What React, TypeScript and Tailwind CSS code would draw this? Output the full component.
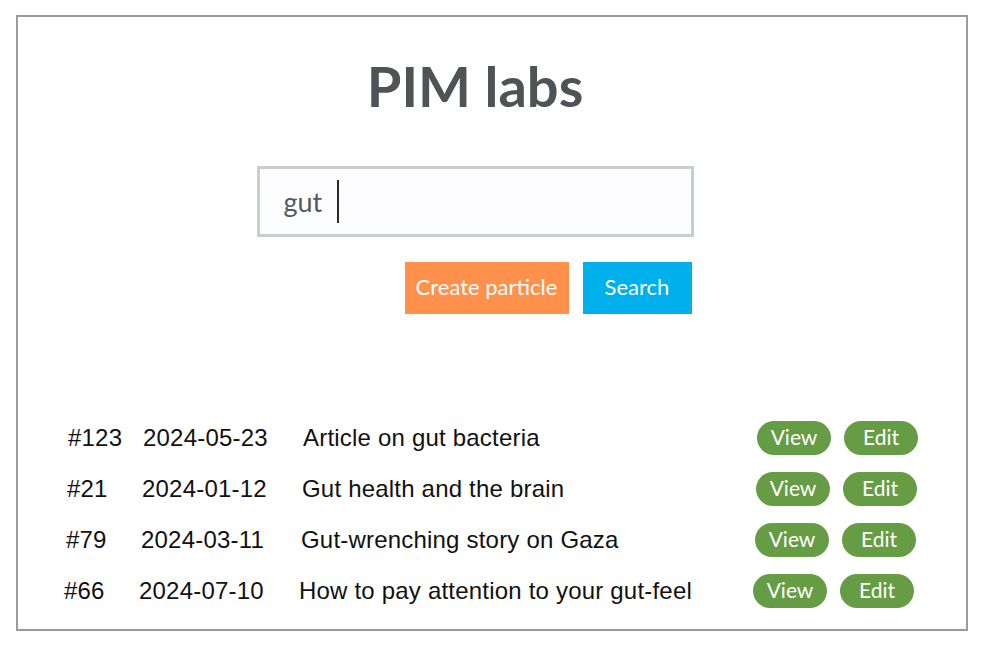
import React from "react";

const rows = [
  { id: "#123", date: "2024-05-23", title: "Article on gut bacteria", pad: "pl-[50px]" },
  { id: "#21", date: "2024-01-12", title: "Gut health and the brain", pad: "pl-[49px]" },
  { id: "#79", date: "2024-03-11", title: "Gut-wrenching story on Gaza", pad: "pl-[48px]" },
  { id: "#66", date: "2024-07-10", title: "How to pay attention to your gut-feel", pad: "pl-[46px]" },
];

const sans = "font-['Lato','Noto_Sans',sans-serif]";
const helv = "font-['Liberation_Sans','Arial',sans-serif] tracking-[0.2px]";

export default function App() {
  return (
    <div className="bg-white w-[984px] h-[646px] pt-[15px] pl-[16px]">
      <div className="w-[952px] h-[616px] border-2 border-[#9b9b9b] bg-white">
        <div className="flex flex-col items-center pr-[34px] pt-[41px]">
          <h1 className={`${sans} text-[56px] leading-[56px] font-bold text-[#4f5355]`}>PIM labs</h1>
          <div className="mt-[52px] w-[437px] h-[71px] border-[3px] border-[#c6cece] bg-[#fdfdff] flex items-center pl-[24px]">
            <span className={`${sans} text-[27px] text-[#55595c] leading-none`}>gut</span>
            <span className="ml-[15px] w-[2px] h-[43px] bg-[#2a2a2a]" />
          </div>
          <div className="mt-[25px] w-[437px] flex justify-end gap-[14px] pr-[2px]">
            <button className={`${sans} w-[164px] h-[52px] pb-[3px] bg-[#ff914d] text-white text-[22px] flex items-center justify-center`}>
              Create particle
            </button>
            <button className={`${sans} w-[109px] h-[52px] pb-[3px] bg-[#00b0ec] text-white text-[22px] flex items-center justify-center`}>
              Search
            </button>
          </div>
        </div>
        <div className="mt-[98px] flex flex-col">
          {rows.map((r) => (
            <div key={r.id} className={`h-[51px] flex items-center ${r.pad}`}>
              <div className={`w-[75px] ${helv} text-[24px] text-[#111]`}>{r.id}</div>
              <div className={`w-[160px] ${helv} text-[24px] text-[#111]`}>{r.date}</div>
              <div className={`w-[454px] ${helv} text-[24px] text-[#111]`}>{r.title}</div>
              <div className="flex gap-[13px]">
                <button className={`${sans} w-[74px] h-[34px] pb-[2px] rounded-full bg-[#669c44] text-white text-[21px] flex items-center justify-center`}>
                  View
                </button>
                <button className={`${sans} w-[74px] h-[34px] pb-[2px] rounded-full bg-[#669c44] text-white text-[21px] flex items-center justify-center`}>
                  Edit
                </button>
              </div>
            </div>
          ))}
        </div>
      </div>
    </div>
  );
}
